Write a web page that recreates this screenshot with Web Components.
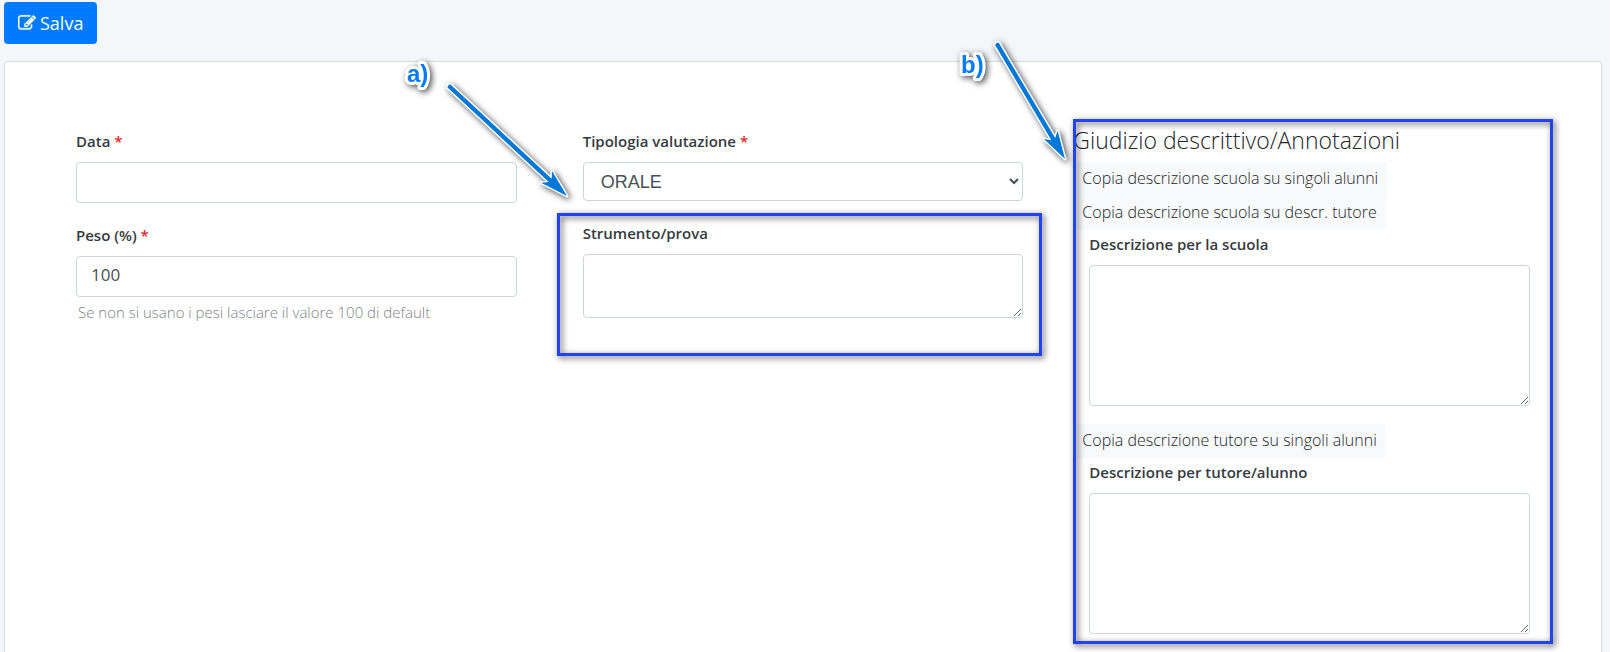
<!DOCTYPE html>
<html lang="it">
<head>
<meta charset="utf-8">
<meta name="viewport" content="width=device-width, initial-scale=1">
<title>Valutazione</title>
<style>
  body {
    margin: 0;
    background: #f5f6fa;
    color: #212529;
    font-family: "Open Sans", sans-serif;
    font-size: 16px;
    line-height: 24px;
  }
</style>
</head>
<body>
<valutazione-page>
  <save-button slot="toolbar">Salva</save-button>

  <form-column>
    <form-field kind="input" label="Data" required></form-field>
    <form-field kind="input" label="Peso (%)" value="100" required
      hint="Se non si usano i pesi lasciare il valore 100 di default"></form-field>
  </form-column>

  <form-column>
    <form-field kind="select" label="Tipologia valutazione" options="ORALE,SCRITTO,PRATICO" required></form-field>
    <callout-frame class="prova" mark="a)" mark-at="-150,-131" from="-108,-127" to="10,-17">
      <form-field kind="textarea" label="Strumento/prova"></form-field>
    </callout-frame>
  </form-column>

  <callout-frame class="giudizio" mark="b)" mark-at="-112,-46" from="-76,-75" to="-8,40">
    <description-panel></description-panel>
  </callout-frame>
</valutazione-page>

<script>
class ValutazionePage extends HTMLElement {
  connectedCallback() {
    const shadow = this.attachShadow({ mode: "open" });
    shadow.innerHTML = `
      <style>
        :host {
          display: flex;
          flex-direction: column;
          min-height: 100vh;
          box-sizing: border-box;
          padding: 2px 8px 0 4px;
        }

        header { margin-bottom: 17px; }

        main {
          flex: 1;
          display: grid;
          grid-template-columns: repeat(3, minmax(0, 1fr));
          align-items: start;
          gap: 34px;
          padding: 67px 55px 16px;
          background: #fff;
          border: 1px solid #d9dbe0;
          border-bottom: none;
          border-radius: 4px 4px 0 0;
        }

        @media (max-width: 900px) {
          main { grid-template-columns: 1fr; padding: 32px 16px; }
        }
      </style>
      <header><slot name="toolbar"></slot></header>
      <main><slot></slot></main>
    `;
  }
}

class SaveButton extends HTMLElement {
  connectedCallback() {
    const shadow = this.attachShadow({ mode: "open" });
    shadow.innerHTML = `
      <style>
        :host { display: inline-flex; }

        button {
          display: flex;
          align-items: center;
          gap: 4px;
          height: 42px;
          padding: 0 14px;
          border: none;
          border-radius: 4px;
          background: #007bff;
          color: #fff;
          font-family: inherit;
          font-size: 18px;
          cursor: pointer;
        }
        button:hover { background: #0069d9; }

        svg {
          width: 18px;
          height: 18px;
          fill: currentColor;
          stroke: currentColor;
          stroke-width: 40px;
        }
      </style>
      <button type="button">
        <svg viewBox="0 0 1792 1792" aria-hidden="true">
          <path d="M888 1184l116-116-152-152-116 116v56h96v96h56zm440-720q-16-16-33 1l-350 350q-17 17-1 33t33-1l350-350q17-17 1-33zm80 594v190q0 119-84.500 203.500t-203.500 84.500h-832q-119 0-203.500-84.500t-84.500-203.500v-832q0-119 84.500-203.500t203.500-84.500h832q63 0 117 25 15 7 18 23 3 17-9 29l-49 49q-14 14-32 8-23-6-45-6h-832q-66 0-113 47t-47 113v832q0 66 47 113t113 47h832q66 0 113-47t47-113v-126q0-13 9-22l64-64q15-15 35-7t20 29zm-96-738l288 288-672 672h-288v-288zm444 132l-92 92-288-288 92-92q28-28 68-28t68 28l152 152q28 28 28 68t-28 68z"/>
        </svg>
        <slot></slot>
      </button>
    `;
  }
}

class FormColumn extends HTMLElement {
  connectedCallback() {
    const shadow = this.attachShadow({ mode: "open" });
    shadow.innerHTML = `
      <style>
        :host {
          display: flex;
          flex-direction: column;
          gap: 20px;
        }
      </style>
      <slot></slot>
    `;
  }
}

class FormField extends HTMLElement {
  connectedCallback() {
    const shadow = this.attachShadow({ mode: "open" });
    const label = this.getAttribute("label");
    const hint = this.getAttribute("hint");
    const star = this.hasAttribute("required") ? ` <span class="star">*</span>` : "";

    shadow.innerHTML = `
      <style>
        :host {
          display: block;
          padding: 0 16px;
        }

        label {
          display: block;
          margin-bottom: 9px;
          color: #343a40;
          font-size: 15px;
          font-weight: 600;
        }

        .star { color: #e3242b; }

        input, select, textarea {
          display: block;
          width: 100%;
          box-sizing: border-box;
          border: 1px solid #ced4da;
          border-radius: 4px;
          background-color: #fff;
          color: #495057;
          font-family: inherit;
          font-size: 17px;
        }
        input:focus, select:focus, textarea:focus {
          border-color: #80bdff;
          outline: none;
        }

        input { height: 41px; padding: 0 14px 4px; }
        textarea { height: var(--area-height, 64px); padding: 8px 14px; }
        select {
          height: 39px;
          padding: 0 4px 0 13px;
          font-family: "Liberation Sans", sans-serif;
          font-size: 18px;
        }

        small {
          display: block;
          margin-top: 3px;
          padding-left: 2px;
          color: #7c7f83;
          font-size: 15px;
          font-weight: 300;
        }
      </style>
      <label for="control">${label}${star}</label>
      ${this.control()}
      ${hint ? `<small>${hint}</small>` : ""}
    `;
  }

  control() {
    const kind = this.getAttribute("kind");
    if (kind === "select") {
      const options = this.getAttribute("options").split(",");
      return `<select id="control">${options.map(o => `<option>${o}</option>`).join("")}</select>`;
    }
    if (kind === "textarea") return `<textarea id="control"></textarea>`;
    return `<input id="control" type="text" value="${this.getAttribute("value") || ""}">`;
  }
}

class CopyButton extends HTMLElement {
  connectedCallback() {
    const shadow = this.attachShadow({ mode: "open" });
    shadow.innerHTML = `
      <style>
        :host { display: flex; }

        button {
          height: 34px;
          padding: 0 9px 2px;
          border: none;
          border-radius: 3px;
          background: #f8f9fa;
          color: #212529;
          font-family: inherit;
          font-size: 16px;
          font-weight: 300;
          cursor: pointer;
        }
        button:hover { background: #e2e6ea; }
      </style>
      <button type="button"><slot></slot></button>
    `;
  }
}

class DescriptionPanel extends HTMLElement {
  connectedCallback() {
    const shadow = this.attachShadow({ mode: "open" });
    shadow.innerHTML = `
      <style>
        :host {
          display: block;
          --area-height: 141px;
        }

        h2 {
          margin: 0 0 11px;
          font-size: 23px;
          font-weight: 300;
          line-height: 22px;
        }

        form-field { margin: 2px 0 18px; }
        form-field:last-child { margin-bottom: 0; }
      </style>
      <h2>Giudizio descrittivo/Annotazioni</h2>
      <copy-button>Copia descrizione scuola su singoli alunni</copy-button>
      <copy-button>Copia descrizione scuola su descr. tutore</copy-button>
      <form-field kind="textarea" label="Descrizione per la scuola"></form-field>
      <copy-button>Copia descrizione tutore su singoli alunni</copy-button>
      <form-field kind="textarea" label="Descrizione per tutore/alunno"></form-field>
    `;
  }
}

// Blue outline laid over its content, with a lettered arrow.
// Coordinates are relative to the outline's top left corner.
class CalloutFrame extends HTMLElement {
  connectedCallback() {
    const shadow = this.attachShadow({ mode: "open" });
    const [mx, my] = this.point("mark-at");
    const [x1, y1] = this.point("from");
    const [x2, y2] = this.point("to");
    const len = Math.hypot(x2 - x1, y2 - y1);
    const angle = Math.atan2(y2 - y1, x2 - x1) * 180 / Math.PI;

    shadow.innerHTML = `
      <style>
        :host {
          display: block;
          position: relative;
        }

        .frame {
          position: absolute;
          inset: -10px -7px -10px 0;
          border: 3px solid #1f43f5;
          filter: drop-shadow(2px 2px 3px rgba(0, 0, 0, 0.7));
          pointer-events: none;
        }
        :host(.prova) .frame { inset: -8px -3px -38px -10px; }

        svg {
          position: absolute;
          top: -3px;
          left: -3px;
          width: 1px;
          height: 1px;
          overflow: visible;
        }

        .arrow {
          fill: #0078d7;
          stroke: #fff;
          stroke-width: 3px;
          stroke-linejoin: round;
          paint-order: stroke;
        }

        .mark {
          fill: #007bff;
          stroke: #fff;
          stroke-width: 6px;
          stroke-linejoin: round;
          paint-order: stroke;
          font-family: "Liberation Sans", sans-serif;
          font-size: 24px;
          font-weight: 700;
        }
      </style>
      <slot></slot>
      <div class="frame">
        <svg>
          <path class="arrow" transform="translate(${x1} ${y1}) rotate(${angle})"
            d="M0 -2.200 H${len - 23} L${len - 28} -8 L${len} 0 L${len - 28} 8 L${len - 23} 2.200 H0 Q-2 0 0 -2.200 Z"/>
          <text class="mark" x="${mx}" y="${my}">${this.getAttribute("mark")}</text>
        </svg>
      </div>
    `;
  }

  point(name) {
    return this.getAttribute(name).split(",").map(Number);
  }
}

customElements.define("valutazione-page", ValutazionePage);
customElements.define("save-button", SaveButton);
customElements.define("form-column", FormColumn);
customElements.define("form-field", FormField);
customElements.define("copy-button", CopyButton);
customElements.define("description-panel", DescriptionPanel);
customElements.define("callout-frame", CalloutFrame);
</script>
</body>
</html>
